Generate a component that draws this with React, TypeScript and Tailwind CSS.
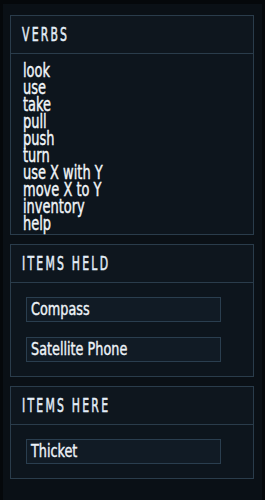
import React from 'react';

const font = { fontFamily: '"DejaVu Sans Condensed", "Liberation Sans", sans-serif' };

const verbs = ['look', 'use', 'take', 'pull', 'push', 'turn', 'use X with Y', 'move X to Y', 'inventory', 'help'];

const PanelHeader: React.FC<{ title: string }> = ({ title }) => (
  <div className="h-[38px] flex items-center pl-[11px] border-b border-[#2a3c4b] bg-[#0e161e]">
    <span className="inline-block origin-left scale-x-[0.62] text-[19.5px] tracking-[3.6px] text-[#e4eef8] whitespace-nowrap [-webkit-text-stroke:0.5px_#e4eef8]">
      {title}
    </span>
  </div>
);

const ItemBox: React.FC<{ label: string }> = ({ label }) => (
  <div className="w-[195px] h-[25px] flex items-center pl-[4px] bg-[#111b25] border border-[#2a3e4f] text-[18.5px] text-[#eef3f8] leading-none">
    <span className="inline-block origin-left scale-x-[0.77] whitespace-nowrap [-webkit-text-stroke:0.4px_#eef3f8]">
      {label}
    </span>
  </div>
);

const ItemsPanel: React.FC<{ title: string; items: string[] }> = ({ title, items }) => (
  <div className="border border-[#2a3c4b] bg-[#0d151d]">
    <PanelHeader title={title} />
    <div className="flex flex-col gap-[15px] pl-[15px] pt-[14px] pb-[14px]">
      {items.map((it) => (
        <ItemBox key={it} label={it} />
      ))}
    </div>
  </div>
);

export default function App() {
  return (
    <div className="min-h-[500px] bg-[#05080b] pt-[4px] px-[3px]" style={font}>
      <div className="min-h-[496px] bg-[#0a1016] pl-[7px] pr-[8px] pt-[11px] flex flex-col gap-[9px]">
        {/* verbs */}
        <div className="border border-[#2a3c4b] bg-[#0d151d]">
          <PanelHeader title="VERBS" />
          <ul className="pl-[12px] pt-[8px] pb-[2px] text-[19.5px] leading-[17px] text-[#f1f5f9]">
            {verbs.map((v) => (
              <li key={v}>
                <span className="inline-block origin-left scale-x-[0.74] whitespace-nowrap [-webkit-text-stroke:0.4px_#f1f5f9]">
                  {v}
                </span>
              </li>
            ))}
          </ul>
        </div>

        <ItemsPanel title="ITEMS HELD" items={['Compass', 'Satellite Phone']} />
        <ItemsPanel title="ITEMS HERE" items={['Thicket']} />
      </div>
    </div>
  );
}
